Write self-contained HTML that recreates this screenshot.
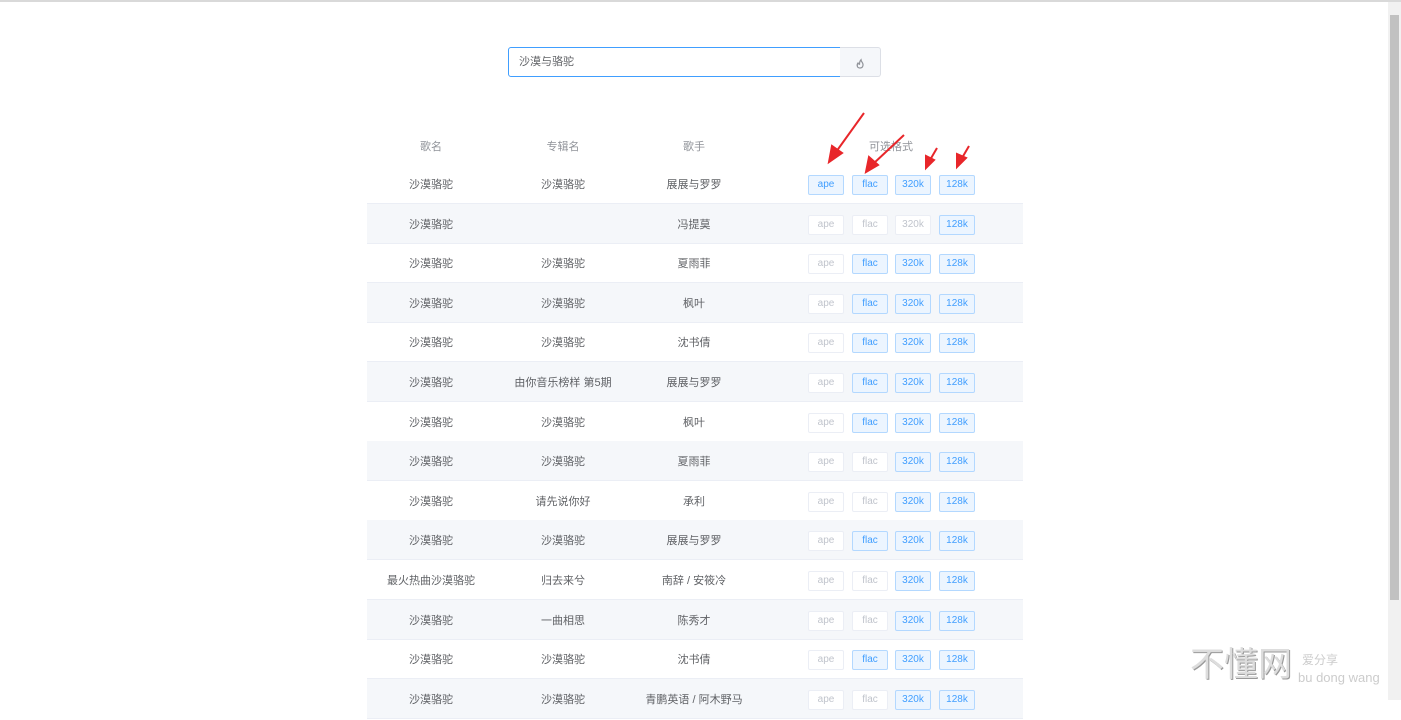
<!DOCTYPE html>
<html><head><meta charset="utf-8"><style>
*{margin:0;padding:0;box-sizing:border-box}
body{width:1401px;height:700px;overflow:hidden;background:#fff;position:relative;font-family:"Liberation Sans","Noto Sans CJK SC",sans-serif;font-size:11px;color:#606266}
.top{position:absolute;left:0;top:0;width:1401px;height:2px;background:#d9d9d9}
.sb{position:absolute;left:1388px;top:2px;width:13px;height:698px;background:#f1f1f1}
.thumb{position:absolute;left:1390px;top:15px;width:9px;height:585px;background:#c1c1c1}
.inp{position:absolute;left:508px;top:47px;width:333px;height:30px;border:1px solid #409eff;border-radius:3px 0 0 3px;padding-left:10px;line-height:28px;color:#606266}
.btn{position:absolute;left:840px;top:47px;width:41px;height:30px;background:#f5f7fa;border:1px solid #dcdfe6;border-left:none;border-radius:0 3px 3px 0}
.row{position:absolute;left:367px;width:656px;height:40px;border-bottom:1px solid #ebeef5}
.g{background:#f5f7fa}
.c{position:absolute;top:2px;line-height:39px;text-align:center;width:140px}
.b{position:absolute;top:11px;height:20px;width:36px;border:1px solid #ebeef5;background:#fff;color:#c0c4cc;text-align:center;line-height:18px;font-size:10px;border-radius:2px}
.a{background:#ecf5ff;border-color:#b3d8ff;color:#409eff}
.hd{position:absolute;top:140px;line-height:14px;text-align:center;width:140px;color:#909399}
.logo{position:absolute;left:1190px;top:645px;font-size:34px;color:#ddd;letter-spacing:0;text-shadow:1px 1px 0 #999;line-height:40px}
.l2{position:absolute;left:1302px;top:651px;font-size:12px;color:#ccc}
.l3{position:absolute;left:1298px;top:670px;font-size:13px;color:#ccc}
</style></head><body>
<div class="top"></div>
<div class="inp">沙漠与骆驼</div>
<div class="btn"><svg width="41" height="30"><path d="M20 20c-3 0-3.5-3-2-5 .5 1 1 1.3 1.5 1.3 0-2 .5-3.5 1.5-4.5 0 2 2.5 3 2 5.5-.3 1.8-1.5 2.7-3 2.7z" fill="none" stroke="#909399" stroke-width="1.2"/></svg></div>
<div class="hd" style="left:361px">歌名</div>
<div class="hd" style="left:493px">专辑名</div>
<div class="hd" style="left:624px">歌手</div>
<div class="hd" style="left:821px">可选格式</div>
<div id="t"></div>
<script>
var d=[["沙漠骆驼","沙漠骆驼","展展与罗罗","1111"],["沙漠骆驼","","冯提莫","0001"],["沙漠骆驼","沙漠骆驼","夏雨菲","0111"],["沙漠骆驼","沙漠骆驼","枫叶","0111"],["沙漠骆驼","沙漠骆驼","沈书倩","0111"],["沙漠骆驼","由你音乐榜样 第5期","展展与罗罗","0111"],["沙漠骆驼","沙漠骆驼","枫叶","0111"],["沙漠骆驼","沙漠骆驼","夏雨菲","0011"],["沙漠骆驼","请先说你好","承利","0011"],["沙漠骆驼","沙漠骆驼","展展与罗罗","0111"],["最火热曲沙漠骆驼","归去来兮","南辞 / 安筱冷","0011"],["沙漠骆驼","一曲相思","陈秀才","0011"],["沙漠骆驼","沙漠骆驼","沈书倩","0111"],["沙漠骆驼","沙漠骆驼","青鹏英语 / 阿木野马","0011"]];
var f=["ape","flac","320k","128k"],x=[441,485,528,572],h="";
d.forEach(function(r,i){h+='<div class="row'+(i%2?' g':'')+'" style="top:'+(164+i*39.6)+'px"><div class="c" style="left:-6px">'+r[0]+'</div><div class="c" style="left:126px">'+r[1]+'</div><div class="c" style="left:257px">'+r[2]+'</div>';
for(var j=0;j<4;j++)h+='<div class="b'+(r[3][j]=="1"?' a':'')+'" style="left:'+x[j]+'px">'+f[j]+'</div>';h+='</div>';});
document.getElementById("t").innerHTML=h;
</script>
<svg style="position:absolute;left:0;top:0" width="1401" height="700">
<g stroke="#e8262a" stroke-width="2" fill="#e8262a">
<line x1="864" y1="113" x2="836" y2="152"/><polygon points="829,162 832,146 842,153"/>
<line x1="904" y1="135" x2="873" y2="164"/><polygon points="866,172 869,157 878,165"/>
<line x1="937" y1="148" x2="930" y2="160"/><polygon points="926,168 926,156 934,160"/>
<line x1="969" y1="146" x2="962" y2="158"/><polygon points="957,167 957,154 966,158"/>
</g></svg>
<div class="sb"></div><div class="thumb"></div>
<div class="logo">不懂网</div><div class="l2">爱分享</div><div class="l3">bu dong wang</div>
</body></html>
